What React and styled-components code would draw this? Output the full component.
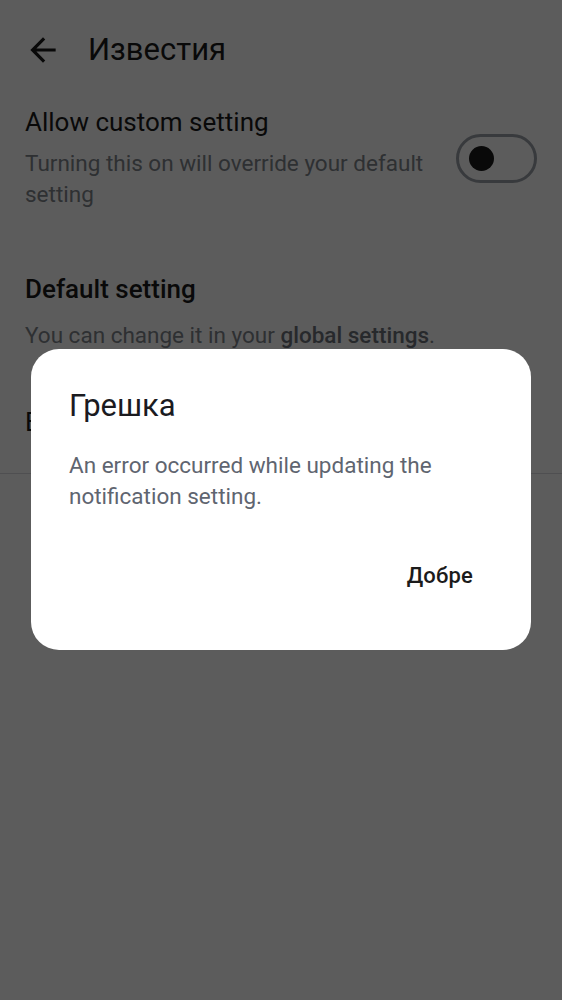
import React from "react";
import styled, { createGlobalStyle } from "styled-components";

const Global = createGlobalStyle`
  html, body { margin: 0; padding: 0; background: #ffffff; }
  body { font-family: Roboto, "Noto Sans", "Liberation Sans", sans-serif; }
  * { box-sizing: border-box; }
`;

const Screen = styled.div`
  position: relative;
  width: 562px;
  height: 1000px;
  overflow: hidden;
  background: #ffffff;
`;

const Header = styled.header`
  height: 100px;
  display: flex;
  align-items: center;
  padding-left: 24px;
  gap: 26px;
`;

const BackIcon = styled.svg`
  width: 38px;
  height: 38px;
  fill: #1b1b1b;
  flex: none;
`;

const Title = styled.h1`
  margin: 0;
  font-size: 31px;
  line-height: 36px;
  font-weight: 400;
  color: #1b1b1b;
`;

const Row = styled.div`
  display: flex;
  align-items: center;
  padding: 6px 25px 0 25px;
  gap: 20px;
`;

const RowText = styled.div`
  flex: 1;
  display: flex;
  flex-direction: column;
  gap: 10px;
`;

const RowTitle = styled.div`
  font-size: 26px;
  line-height: 32px;
  font-weight: ${(p) => (p.$strong ? 500 : 400)};
  color: #1b1b1b;
`;

const RowSub = styled.div`
  font-size: 22.5px;
  line-height: 31px;
  color: #80858c;
  b { font-weight: 500; color: #6e737a; }
`;

const Track = styled.div`
  width: 81px;
  height: 49px;
  border: 3px solid #9ba1a8;
  border-radius: 25px;
  display: flex;
  align-items: center;
  padding-left: 10px;
  flex: none;
`;

const Thumb = styled.div`
  width: 25px;
  height: 25px;
  border-radius: 50%;
  background: #1a1a1a;
`;

const Section = styled.div`
  padding: 63px 25px 0 25px;
  display: flex;
  flex-direction: column;
  gap: 15px;
`;

const NextRow = styled.div`
  padding: 55px 25px 0 25px;
  height: 123px;
  border-bottom: 1px solid #dadce0;
  font-size: 26px;
  line-height: 32px;
  color: #1b1b1b;
`;

const Overlay = styled.div`
  position: absolute;
  inset: 0;
  background: rgba(0, 0, 0, 0.64);
  display: flex;
  justify-content: center;
  align-items: flex-start;
  padding-top: 349px;
`;

const Dialog = styled.div`
  width: 500px;
  height: 301px;
  background: #ffffff;
  border-radius: 28px;
  padding: 39px 38px 0 38px;
  display: flex;
  flex-direction: column;
`;

const DialogTitle = styled.h2`
  margin: 0;
  font-size: 31px;
  line-height: 36px;
  font-weight: 400;
  color: #1b1b1f;
`;

const DialogBody = styled.p`
  margin: 26px 0 0 0;
  font-size: 22.5px;
  line-height: 31px;
  color: #5f6570;
`;

const Actions = styled.div`
  display: flex;
  justify-content: flex-end;
  margin-top: 43px;
`;

const TextButton = styled.button`
  border: none;
  background: transparent;
  padding: 0 20px;
  height: 40px;
  font-family: inherit;
  font-size: 22px;
  font-weight: 500;
  letter-spacing: 0.2px;
  color: #1b1b1b;
`;

export default function App() {
  return (
    <>
      <Global />
      <Screen>
        <Header>
          <BackIcon viewBox="0 0 24 24">
            <path d="M20 11H7.83l5.59-5.59L12 4l-8 8 8 8 1.41-1.41L7.83 13H20v-2z" />
          </BackIcon>
          <Title>Известия</Title>
        </Header>
        <Row>
          <RowText>
            <RowTitle>Allow custom setting</RowTitle>
            <RowSub>Turning this on will override your default setting</RowSub>
          </RowText>
          <Track>
            <Thumb />
          </Track>
        </Row>
        <Section>
          <RowTitle $strong>Default setting</RowTitle>
          <RowSub>
            You can change it in your <b>global settings</b>.
          </RowSub>
        </Section>
        <NextRow>Both</NextRow>
        <Overlay>
          <Dialog>
            <DialogTitle>Грешка</DialogTitle>
            <DialogBody>An error occurred while updating the notification setting.</DialogBody>
            <Actions>
              <TextButton>Добре</TextButton>
            </Actions>
          </Dialog>
        </Overlay>
      </Screen>
    </>
  );
}
